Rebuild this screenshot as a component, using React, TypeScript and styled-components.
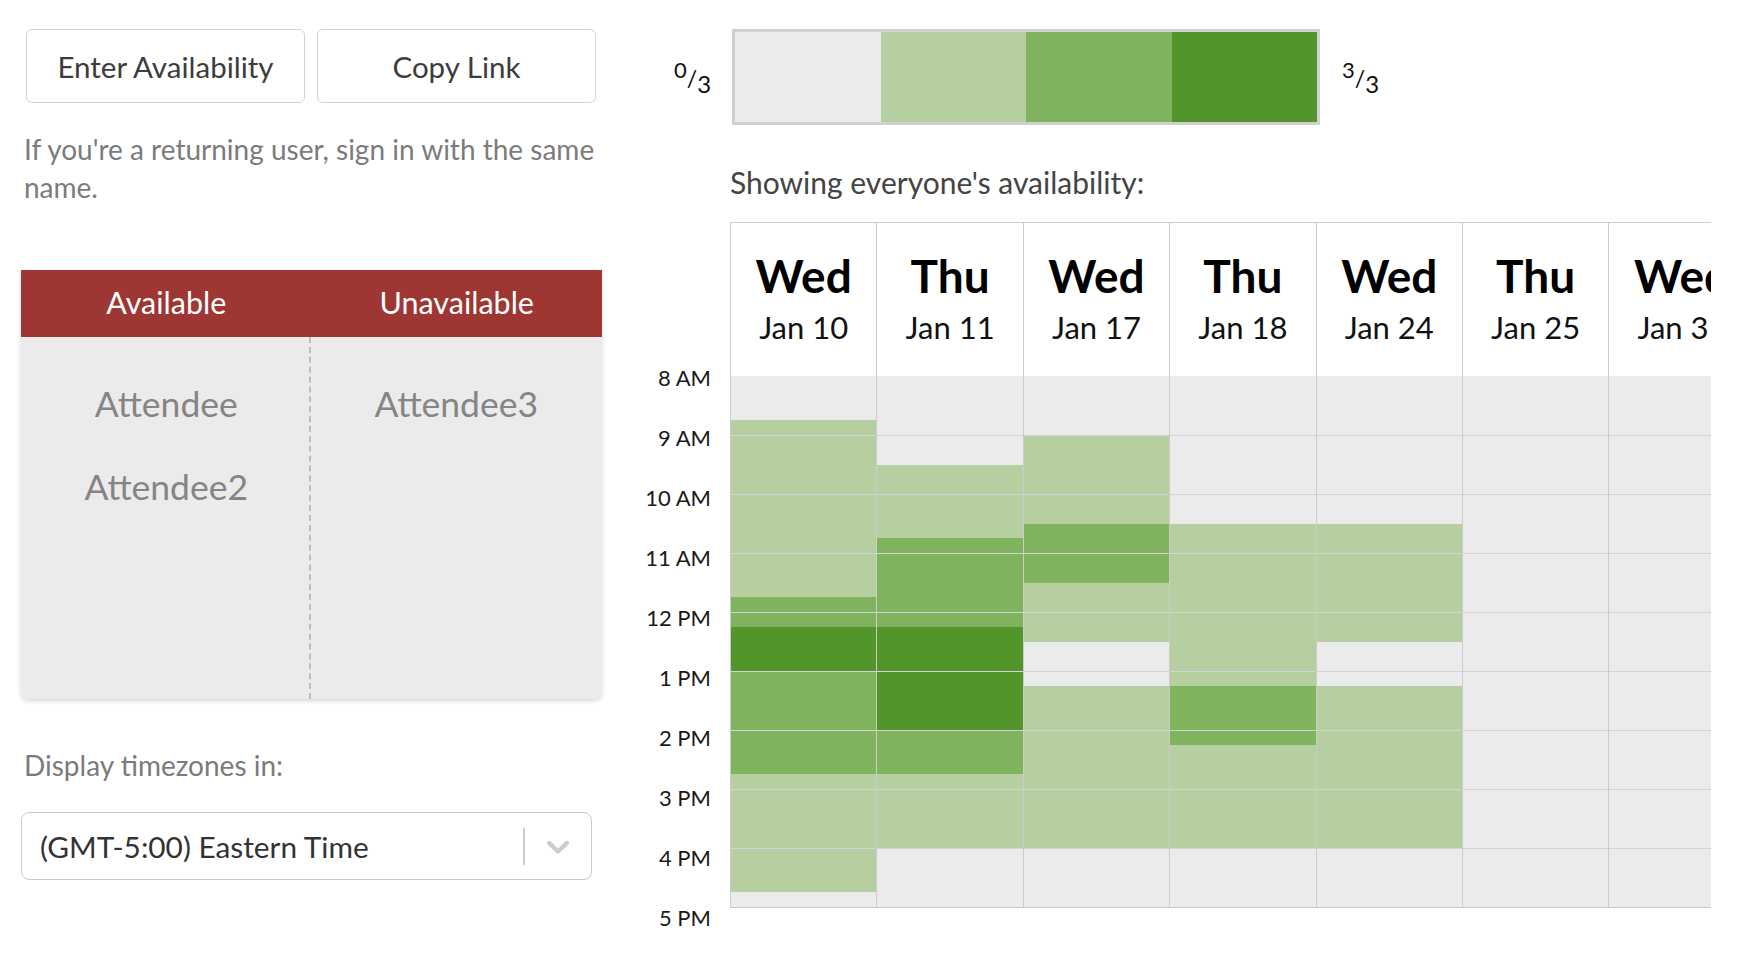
import React from "react";
import styled, { createGlobalStyle } from "styled-components";

const GlobalStyle = createGlobalStyle`
  html, body { margin: 0; padding: 0; background: #ffffff; }
  body { font-family: Lato, "Noto Sans", "Liberation Sans", sans-serif; }
  * { box-sizing: border-box; }
`;

const QUARTER = 14.75;
const LEVEL_COLORS = ["#ebebeb", "#b5cfa1", "#80b35d", "#52962b"];

type Segment = [number, number, number];

const DAYS: { name: string; date: string; segments: Segment[] }[] = [
  { name: "Wed", date: "Jan 10", segments: [[0, 3, 0], [3, 15, 1], [15, 17, 2], [17, 20, 3], [20, 27, 2], [27, 35, 1], [35, 36, 0]] },
  { name: "Thu", date: "Jan 11", segments: [[0, 6, 0], [6, 11, 1], [11, 17, 2], [17, 24, 3], [24, 27, 2], [27, 32, 1], [32, 36, 0]] },
  { name: "Wed", date: "Jan 17", segments: [[0, 4, 0], [4, 10, 1], [10, 14, 2], [14, 18, 1], [18, 21, 0], [21, 32, 1], [32, 36, 0]] },
  { name: "Thu", date: "Jan 18", segments: [[0, 10, 0], [10, 21, 1], [21, 25, 2], [25, 32, 1], [32, 36, 0]] },
  { name: "Wed", date: "Jan 24", segments: [[0, 10, 0], [10, 18, 1], [18, 21, 0], [21, 32, 1], [32, 36, 0]] },
  { name: "Thu", date: "Jan 25", segments: [[0, 36, 0]] },
  { name: "Wed", date: "Jan 31", segments: [[0, 36, 0]] },
];

const HOURS = ["8 AM", "9 AM", "10 AM", "11 AM", "12 PM", "1 PM", "2 PM", "3 PM", "4 PM", "5 PM"];

const Page = styled.div`
  display: flex;
  align-items: flex-start;
  padding: 29px 0 0 21px;
  width: 1748px;
  height: 974px;
  overflow: hidden;
`;

const LeftPanel = styled.div`
  flex: none;
  width: 581px;
  display: flex;
  flex-direction: column;
`;

const ButtonRow = styled.div`
  display: flex;
  gap: 12px;
  padding: 0 6px 0 5px;
`;

const ActionButton = styled.button`
  flex: 1;
  height: 74px;
  background: #ffffff;
  border: 1px solid #d2d2d2;
  border-radius: 6px;
  font-family: inherit;
  font-size: 29.5px;
  color: #3c3c3c;
  cursor: pointer;
`;

const HelpText = styled.p`
  margin: 27px 0 0 3px;
  font-size: 28px;
  line-height: 38px;
  color: #7b7b7b;
  max-width: 578px;
`;

const AttendanceTable = styled.div`
  margin-top: 64px;
  border-radius: 0 0 8px 8px;
  overflow: hidden;
  box-shadow: 0 2px 5px rgba(0, 0, 0, 0.16);
`;

const TableHeader = styled.div`
  display: grid;
  grid-template-columns: 1fr 1fr;
  align-items: center;
  height: 67px;
  background: #9e3733;
  color: #ffffff;
  font-size: 30.5px;
  text-align: center;
  padding-bottom: 3px;
`;

const TableBody = styled.div`
  display: grid;
  grid-template-columns: 1fr 1fr;
  height: 362px;
  background: #ebebeb;
`;

const NameList = styled.div<{ $divided?: boolean }>`
  display: flex;
  flex-direction: column;
  align-items: center;
  padding-top: 25px;
  border-left: ${(p) => (p.$divided ? "2px dashed #bdbdbd" : "none")};
  margin-left: ${(p) => (p.$divided ? "-3px" : "0")};
`;

const Name = styled.div`
  font-size: 35.5px;
  line-height: 83px;
  color: #858585;
`;

const FieldLabel = styled.div`
  margin: 47px 0 0 3px;
  font-size: 28px;
  line-height: 38px;
  color: #7b7b7b;
`;

const Select = styled.div`
  margin-top: 28px;
  width: 571px;
  height: 68px;
  border: 1px solid #cccccc;
  border-radius: 8px;
  display: flex;
  align-items: center;
  background: #ffffff;
`;

const SelectValue = styled.div`
  flex: 1;
  padding-left: 18px;
  font-size: 29.8px;
  color: #333333;
`;

const SelectSeparator = styled.span`
  width: 2px;
  height: 37px;
  background: #cccccc;
`;

const SelectIndicator = styled.div`
  width: 66px;
  display: flex;
  align-items: center;
  justify-content: center;
  color: #cccccc;
`;

const RightPanel = styled.div`
  flex: none;
  margin-left: 38px;
  display: flex;
  flex-direction: column;
`;

const LegendRow = styled.div`
  display: flex;
  align-items: center;
  padding-left: 34px;
  gap: 22px;
`;

const Fraction = styled.div`
  width: 36px;
  font-size: 23px;
  color: #111111;
  white-space: nowrap;
  line-height: 1;
`;

const Sup = styled.sup`
  font-size: 22px;
  vertical-align: 9px;
`;

const Sub = styled.sub`
  font-size: 24px;
  vertical-align: -6px;
`;

const LegendBar = styled.div`
  display: flex;
  width: 588px;
  height: 96px;
  border: 3px solid #d0d0d0;
`;

const LegendSwatch = styled.div<{ $level: number }>`
  flex: 1;
  background: ${(p) => LEVEL_COLORS[p.$level]};
`;

const Caption = styled.div`
  margin: 42px 0 0 90px;
  font-size: 30px;
  line-height: 30px;
  color: #444444;
`;

const Schedule = styled.div`
  display: flex;
  align-items: flex-start;
  margin-top: 25px;
`;

const TimeColumn = styled.div`
  flex: none;
  width: 90px;
  padding-top: 123.5px;
  display: flex;
  flex-direction: column;
`;

const TimeLabel = styled.div`
  height: 60px;
  display: flex;
  align-items: center;
  justify-content: flex-end;
  padding: 3px 19px 0 0;
  font-size: 22px;
  color: #1a1a1a;
`;

const DaysViewport = styled.div`
  width: 981px;
  overflow: hidden;
  display: flex;
  align-items: flex-start;
`;

const DayColumn = styled.div`
  flex: 0 0 146.4px;
  border-left: 1px solid #cccccc;
  display: flex;
  flex-direction: column;
`;

const DayHeader = styled.div`
  height: 154px;
  border-top: 1px solid #cccccc;
  background: #ffffff;
  display: flex;
  flex-direction: column;
  align-items: center;
  padding-top: 27px;
  white-space: nowrap;
`;

const DayName = styled.div`
  font-size: 46px;
  font-weight: 700;
  line-height: 52px;
  color: #000000;
`;

const DayDate = styled.div`
  margin-top: 5px;
  font-size: 31px;
  line-height: 40px;
  color: #111111;
`;

const DayBody = styled.div`
  position: relative;
  height: 532px;
  border-bottom: 1px solid #cccccc;
  display: flex;
  flex-direction: column;

  &::after {
    content: "";
    position: absolute;
    left: 0;
    right: 0;
    top: 59px;
    bottom: 0;
    background: repeating-linear-gradient(
      to bottom,
      #d3d3d3 0,
      #d3d3d3 1px,
      transparent 1px,
      transparent 59px
    );
    pointer-events: none;
  }
`;

const Slot = styled.div<{ $level: number; $quarters: number }>`
  flex: none;
  height: ${(p) => p.$quarters * QUARTER}px;
  background: ${(p) => LEVEL_COLORS[p.$level]};
`;

const ChevronDown = () => (
  <svg width="38" height="38" viewBox="0 0 20 20" fill="currentColor" aria-hidden="true">
    <path d="M4.516 7.548c0.436-0.446 1.043-0.481 1.576 0l3.908 3.747 3.908-3.747c0.533-0.481 1.141-0.446 1.574 0 0.436 0.445 0.408 1.197 0 1.615-0.406 0.418-4.695 4.502-4.695 4.502-0.217 0.223-0.502 0.335-0.787 0.335s-0.57-0.112-0.789-0.335c0 0-4.287-4.084-4.695-4.502s-0.436-1.17 0-1.615z" />
  </svg>
);

export default function App() {
  return (
    <>
      <GlobalStyle />
      <Page>
        <LeftPanel>
          <ButtonRow>
            <ActionButton>Enter Availability</ActionButton>
            <ActionButton>Copy Link</ActionButton>
          </ButtonRow>
          <HelpText>If you're a returning user, sign in with the same name.</HelpText>
          <AttendanceTable>
            <TableHeader>
              <div>Available</div>
              <div>Unavailable</div>
            </TableHeader>
            <TableBody>
              <NameList>
                <Name>Attendee</Name>
                <Name>Attendee2</Name>
              </NameList>
              <NameList $divided>
                <Name>Attendee3</Name>
              </NameList>
            </TableBody>
          </AttendanceTable>
          <FieldLabel>Display timezones in:</FieldLabel>
          <Select>
            <SelectValue>(GMT-5:00) Eastern Time</SelectValue>
            <SelectSeparator />
            <SelectIndicator>
              <ChevronDown />
            </SelectIndicator>
          </Select>
        </LeftPanel>
        <RightPanel>
          <LegendRow>
            <Fraction>
              <Sup>0</Sup>/<Sub>3</Sub>
            </Fraction>
            <LegendBar>
              {[0, 1, 2, 3].map((l) => (
                <LegendSwatch key={l} $level={l} />
              ))}
            </LegendBar>
            <Fraction>
              <Sup>3</Sup>/<Sub>3</Sub>
            </Fraction>
          </LegendRow>
          <Caption>Showing everyone's availability:</Caption>
          <Schedule>
            <TimeColumn>
              {HOURS.map((h) => (
                <TimeLabel key={h}>{h}</TimeLabel>
              ))}
            </TimeColumn>
            <DaysViewport>
              {DAYS.map((d) => (
                <DayColumn key={d.date}>
                  <DayHeader>
                    <DayName>{d.name}</DayName>
                    <DayDate>{d.date}</DayDate>
                  </DayHeader>
                  <DayBody>
                    {d.segments.map(([s, e, l], i) => (
                      <Slot key={i} $level={l} $quarters={e - s} />
                    ))}
                  </DayBody>
                </DayColumn>
              ))}
            </DaysViewport>
          </Schedule>
        </RightPanel>
      </Page>
    </>
  );
}
